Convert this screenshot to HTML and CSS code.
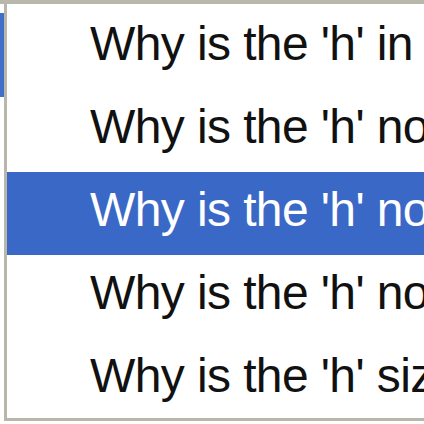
FILE: index.html
```html
<!DOCTYPE html>
<html>
<head>
<meta charset="utf-8">
<link rel="stylesheet" href="styles.css">
</head>
<body>
<div class="screen">
  <div class="frame">
    <div class="behind"><div class="focus"></div></div>
    <ul class="menu">
      <li class="item">Why is the 'h' in</li>
      <li class="item">Why is the 'h' no</li>
      <li class="item selected">Why is the 'h' no</li>
      <li class="item">Why is the 'h' no</li>
      <li class="item">Why is the 'h' siz</li>
    </ul>
  </div>
</div>
</body>
</html>
```
FILE: styles.css
```css
html, body {
  margin: 0;
  padding: 0;
  background: #ffffff;
}
.screen {
  width: 424px;
  height: 424px;
  overflow: hidden;
  border-top: 4px solid #b9b6ab;
  box-sizing: border-box;
}
.frame {
  display: flex;
  height: 100%;
}
.behind {
  width: 4px;
  flex: none;
  padding-top: 9px;
}
.focus {
  height: 84px;
  background: #3f6fc8;
}
.menu {
  list-style: none;
  margin: 0;
  padding: 2px 0 0 0;
  flex: 1;
  border-left: 3px solid #b9b6ab;
  border-bottom: 3px solid #b9b6ab;
  height: 417px;
  box-sizing: border-box;
  overflow: hidden;
}
.item {
  height: 83px;
  box-sizing: border-box;
  padding: 10px 0 0 83px;
  font-family: "Liberation Sans", Arial, sans-serif;
  font-size: 48px;
  letter-spacing: -0.6px;
  line-height: 56px;
  color: #111111;
  white-space: nowrap;
}
.selected {
  background: #3a68c6;
  color: #ffffff;
}
```
